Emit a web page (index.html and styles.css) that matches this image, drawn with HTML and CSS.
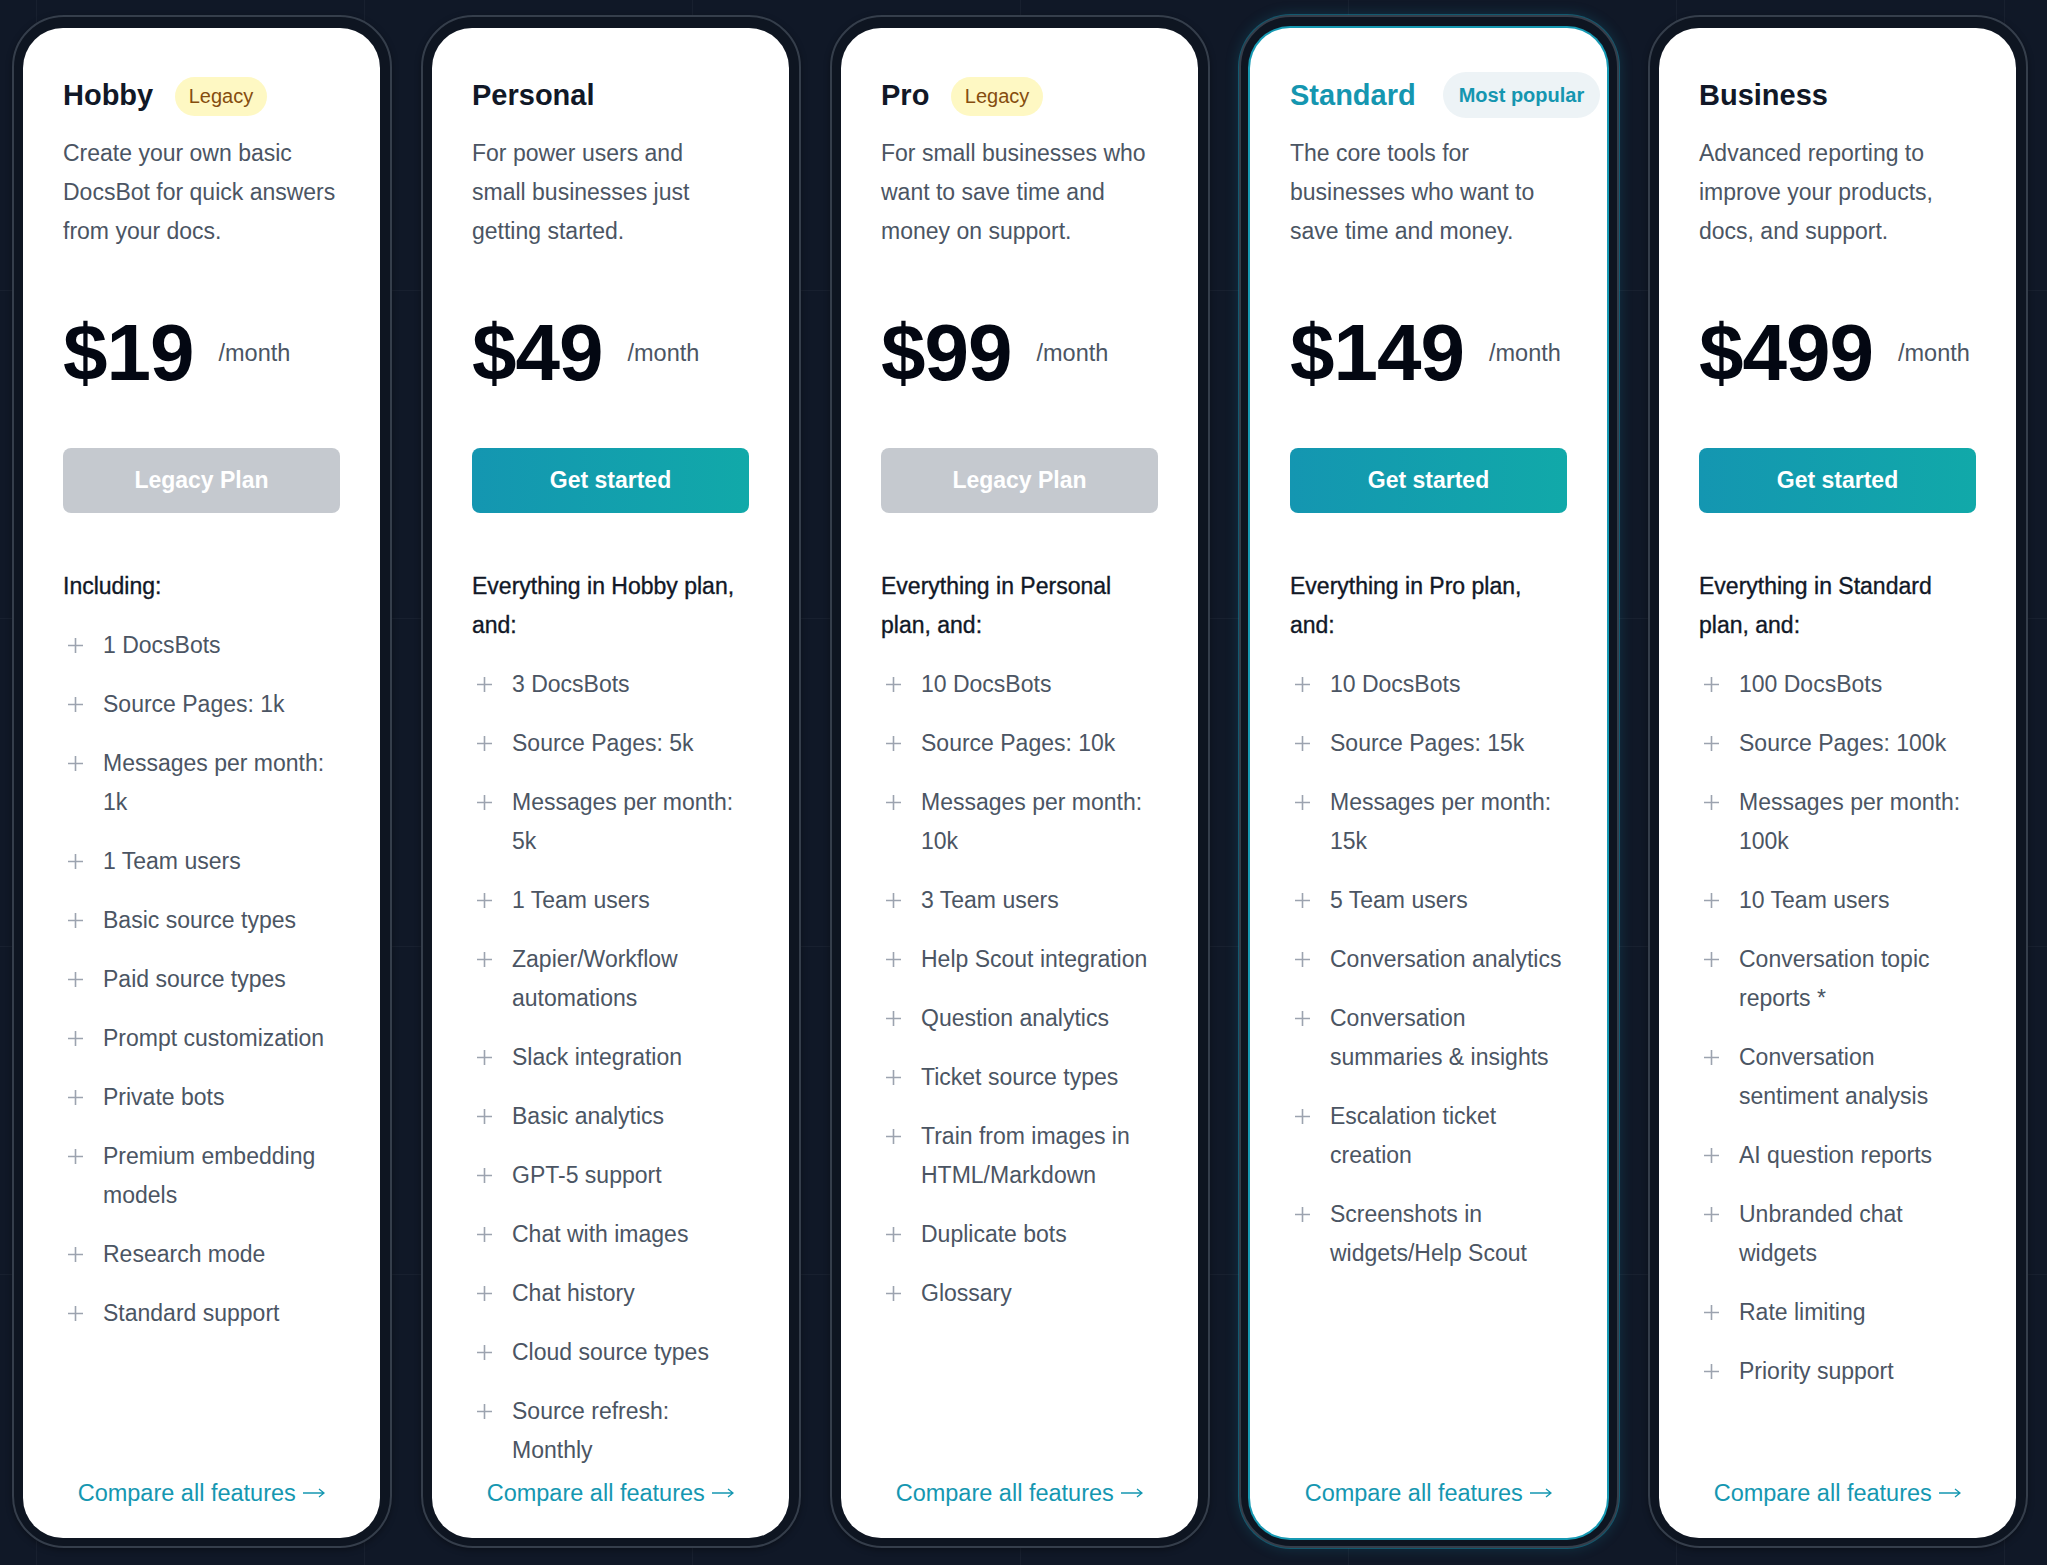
FILE: index.html
```html
<!DOCTYPE html>
<html lang="en">
<head>
<meta charset="utf-8">
<title>Pricing</title>
<link rel="stylesheet" href="styles.css">
</head>
<body>
<main class="plans">

  <section class="frame">
    <div class="card">
      <div class="card-head">
        <h2 class="plan-name">Hobby</h2>
        <span class="pill pill-legacy">Legacy</span>
      </div>
      <p class="desc">Create your own basic<br>DocsBot for quick answers<br>from your docs.</p>
      <div class="price"><span class="amount">$19</span><span class="per">/month</span></div>
      <a class="btn btn-legacy">Legacy Plan</a>
      <h3 class="incl">Including:</h3>
      <ul class="features">
        <li><svg class="plus" viewBox="0 0 25 39"><path d="M5 19.5H20M12.5 12V27"/></svg><span>1 DocsBots</span></li>
        <li><svg class="plus" viewBox="0 0 25 39"><path d="M5 19.5H20M12.5 12V27"/></svg><span>Source Pages: 1k</span></li>
        <li><svg class="plus" viewBox="0 0 25 39"><path d="M5 19.5H20M12.5 12V27"/></svg><span>Messages per month: 1k</span></li>
        <li><svg class="plus" viewBox="0 0 25 39"><path d="M5 19.5H20M12.5 12V27"/></svg><span>1 Team users</span></li>
        <li><svg class="plus" viewBox="0 0 25 39"><path d="M5 19.5H20M12.5 12V27"/></svg><span>Basic source types</span></li>
        <li><svg class="plus" viewBox="0 0 25 39"><path d="M5 19.5H20M12.5 12V27"/></svg><span>Paid source types</span></li>
        <li><svg class="plus" viewBox="0 0 25 39"><path d="M5 19.5H20M12.5 12V27"/></svg><span>Prompt customization</span></li>
        <li><svg class="plus" viewBox="0 0 25 39"><path d="M5 19.5H20M12.5 12V27"/></svg><span>Private bots</span></li>
        <li><svg class="plus" viewBox="0 0 25 39"><path d="M5 19.5H20M12.5 12V27"/></svg><span>Premium embedding models</span></li>
        <li><svg class="plus" viewBox="0 0 25 39"><path d="M5 19.5H20M12.5 12V27"/></svg><span>Research mode</span></li>
        <li><svg class="plus" viewBox="0 0 25 39"><path d="M5 19.5H20M12.5 12V27"/></svg><span>Standard support</span></li>
      </ul>
      <a class="compare">Compare all features <svg class="arrow" viewBox="0 0 22 12"><path d="M0 6H21M16 2L21 6L16 10"/></svg></a>
    </div>
  </section>

  <section class="frame">
    <div class="card">
      <div class="card-head">
        <h2 class="plan-name">Personal</h2>
      </div>
      <p class="desc">For power users and<br>small businesses just<br>getting started.</p>
      <div class="price"><span class="amount">$49</span><span class="per">/month</span></div>
      <a class="btn btn-primary">Get started</a>
      <h3 class="incl">Everything in Hobby plan, and:</h3>
      <ul class="features">
        <li><svg class="plus" viewBox="0 0 25 39"><path d="M5 19.5H20M12.5 12V27"/></svg><span>3 DocsBots</span></li>
        <li><svg class="plus" viewBox="0 0 25 39"><path d="M5 19.5H20M12.5 12V27"/></svg><span>Source Pages: 5k</span></li>
        <li><svg class="plus" viewBox="0 0 25 39"><path d="M5 19.5H20M12.5 12V27"/></svg><span>Messages per month: 5k</span></li>
        <li><svg class="plus" viewBox="0 0 25 39"><path d="M5 19.5H20M12.5 12V27"/></svg><span>1 Team users</span></li>
        <li><svg class="plus" viewBox="0 0 25 39"><path d="M5 19.5H20M12.5 12V27"/></svg><span>Zapier/Workflow automations</span></li>
        <li><svg class="plus" viewBox="0 0 25 39"><path d="M5 19.5H20M12.5 12V27"/></svg><span>Slack integration</span></li>
        <li><svg class="plus" viewBox="0 0 25 39"><path d="M5 19.5H20M12.5 12V27"/></svg><span>Basic analytics</span></li>
        <li><svg class="plus" viewBox="0 0 25 39"><path d="M5 19.5H20M12.5 12V27"/></svg><span>GPT-5 support</span></li>
        <li><svg class="plus" viewBox="0 0 25 39"><path d="M5 19.5H20M12.5 12V27"/></svg><span>Chat with images</span></li>
        <li><svg class="plus" viewBox="0 0 25 39"><path d="M5 19.5H20M12.5 12V27"/></svg><span>Chat history</span></li>
        <li><svg class="plus" viewBox="0 0 25 39"><path d="M5 19.5H20M12.5 12V27"/></svg><span>Cloud source types</span></li>
        <li><svg class="plus" viewBox="0 0 25 39"><path d="M5 19.5H20M12.5 12V27"/></svg><span>Source refresh: Monthly</span></li>
      </ul>
      <a class="compare">Compare all features <svg class="arrow" viewBox="0 0 22 12"><path d="M0 6H21M16 2L21 6L16 10"/></svg></a>
    </div>
  </section>

  <section class="frame">
    <div class="card">
      <div class="card-head">
        <h2 class="plan-name">Pro</h2>
        <span class="pill pill-legacy">Legacy</span>
      </div>
      <p class="desc">For small businesses who<br>want to save time and<br>money on support.</p>
      <div class="price"><span class="amount">$99</span><span class="per">/month</span></div>
      <a class="btn btn-legacy">Legacy Plan</a>
      <h3 class="incl">Everything in Personal plan, and:</h3>
      <ul class="features">
        <li><svg class="plus" viewBox="0 0 25 39"><path d="M5 19.5H20M12.5 12V27"/></svg><span>10 DocsBots</span></li>
        <li><svg class="plus" viewBox="0 0 25 39"><path d="M5 19.5H20M12.5 12V27"/></svg><span>Source Pages: 10k</span></li>
        <li><svg class="plus" viewBox="0 0 25 39"><path d="M5 19.5H20M12.5 12V27"/></svg><span>Messages per month: 10k</span></li>
        <li><svg class="plus" viewBox="0 0 25 39"><path d="M5 19.5H20M12.5 12V27"/></svg><span>3 Team users</span></li>
        <li><svg class="plus" viewBox="0 0 25 39"><path d="M5 19.5H20M12.5 12V27"/></svg><span>Help Scout integration</span></li>
        <li><svg class="plus" viewBox="0 0 25 39"><path d="M5 19.5H20M12.5 12V27"/></svg><span>Question analytics</span></li>
        <li><svg class="plus" viewBox="0 0 25 39"><path d="M5 19.5H20M12.5 12V27"/></svg><span>Ticket source types</span></li>
        <li><svg class="plus" viewBox="0 0 25 39"><path d="M5 19.5H20M12.5 12V27"/></svg><span>Train from images in HTML/Markdown</span></li>
        <li><svg class="plus" viewBox="0 0 25 39"><path d="M5 19.5H20M12.5 12V27"/></svg><span>Duplicate bots</span></li>
        <li><svg class="plus" viewBox="0 0 25 39"><path d="M5 19.5H20M12.5 12V27"/></svg><span>Glossary</span></li>
      </ul>
      <a class="compare">Compare all features <svg class="arrow" viewBox="0 0 22 12"><path d="M0 6H21M16 2L21 6L16 10"/></svg></a>
    </div>
  </section>

  <section class="frame frame-featured">
    <div class="card card-featured">
      <div class="card-head">
        <h2 class="plan-name plan-name-featured">Standard</h2>
        <span class="pill pill-popular">Most popular</span>
      </div>
      <p class="desc">The core tools for<br>businesses who want to<br>save time and money.</p>
      <div class="price"><span class="amount">$149</span><span class="per">/month</span></div>
      <a class="btn btn-primary">Get started</a>
      <h3 class="incl">Everything in Pro plan, and:</h3>
      <ul class="features">
        <li><svg class="plus" viewBox="0 0 25 39"><path d="M5 19.5H20M12.5 12V27"/></svg><span>10 DocsBots</span></li>
        <li><svg class="plus" viewBox="0 0 25 39"><path d="M5 19.5H20M12.5 12V27"/></svg><span>Source Pages: 15k</span></li>
        <li><svg class="plus" viewBox="0 0 25 39"><path d="M5 19.5H20M12.5 12V27"/></svg><span>Messages per month: 15k</span></li>
        <li><svg class="plus" viewBox="0 0 25 39"><path d="M5 19.5H20M12.5 12V27"/></svg><span>5 Team users</span></li>
        <li><svg class="plus" viewBox="0 0 25 39"><path d="M5 19.5H20M12.5 12V27"/></svg><span>Conversation analytics</span></li>
        <li><svg class="plus" viewBox="0 0 25 39"><path d="M5 19.5H20M12.5 12V27"/></svg><span>Conversation summaries &amp; insights</span></li>
        <li><svg class="plus" viewBox="0 0 25 39"><path d="M5 19.5H20M12.5 12V27"/></svg><span>Escalation ticket creation</span></li>
        <li><svg class="plus" viewBox="0 0 25 39"><path d="M5 19.5H20M12.5 12V27"/></svg><span>Screenshots in widgets/Help Scout</span></li>
      </ul>
      <a class="compare">Compare all features <svg class="arrow" viewBox="0 0 22 12"><path d="M0 6H21M16 2L21 6L16 10"/></svg></a>
    </div>
  </section>

  <section class="frame">
    <div class="card">
      <div class="card-head">
        <h2 class="plan-name">Business</h2>
      </div>
      <p class="desc">Advanced reporting to<br>improve your products,<br>docs, and support.</p>
      <div class="price"><span class="amount">$499</span><span class="per">/month</span></div>
      <a class="btn btn-primary">Get started</a>
      <h3 class="incl">Everything in Standard plan, and:</h3>
      <ul class="features">
        <li><svg class="plus" viewBox="0 0 25 39"><path d="M5 19.5H20M12.5 12V27"/></svg><span>100 DocsBots</span></li>
        <li><svg class="plus" viewBox="0 0 25 39"><path d="M5 19.5H20M12.5 12V27"/></svg><span>Source Pages: 100k</span></li>
        <li><svg class="plus" viewBox="0 0 25 39"><path d="M5 19.5H20M12.5 12V27"/></svg><span>Messages per month: 100k</span></li>
        <li><svg class="plus" viewBox="0 0 25 39"><path d="M5 19.5H20M12.5 12V27"/></svg><span>10 Team users</span></li>
        <li><svg class="plus" viewBox="0 0 25 39"><path d="M5 19.5H20M12.5 12V27"/></svg><span>Conversation topic reports *</span></li>
        <li><svg class="plus" viewBox="0 0 25 39"><path d="M5 19.5H20M12.5 12V27"/></svg><span>Conversation sentiment analysis</span></li>
        <li><svg class="plus" viewBox="0 0 25 39"><path d="M5 19.5H20M12.5 12V27"/></svg><span>AI question reports</span></li>
        <li><svg class="plus" viewBox="0 0 25 39"><path d="M5 19.5H20M12.5 12V27"/></svg><span>Unbranded chat widgets</span></li>
        <li><svg class="plus" viewBox="0 0 25 39"><path d="M5 19.5H20M12.5 12V27"/></svg><span>Rate limiting</span></li>
        <li><svg class="plus" viewBox="0 0 25 39"><path d="M5 19.5H20M12.5 12V27"/></svg><span>Priority support</span></li>
      </ul>
      <a class="compare">Compare all features <svg class="arrow" viewBox="0 0 22 12"><path d="M0 6H21M16 2L21 6L16 10"/></svg></a>
    </div>
  </section>

</main>
</body>
</html>
```

FILE: styles.css
```css
* {
  box-sizing: border-box;
}

html, body {
  margin: 0;
  padding: 0;
  height: 100%;
}

body {
  background-color: #101827;
  background-image:
    linear-gradient(to right, rgba(255, 255, 255, 0.035) 1px, transparent 1px),
    linear-gradient(to bottom, rgba(255, 255, 255, 0.035) 1px, transparent 1px);
  background-size: 328px 328px;
  background-position: 36px 290px;
  font-family: "Liberation Sans", Arial, Helvetica, sans-serif;
  overflow: hidden;
}

.plans {
  display: flex;
  gap: 29px;
  padding: 15px 12px 0 12px;
  height: 1548px;
}

.frame {
  width: 380px;
  min-width: 0;
  flex: 0 0 380px;
  display: flex;
  padding: 11px 10px 8px 9px;
  border: 2px solid #353e4b;
  border-radius: 52px;
  background: #0e1521;
  box-shadow: 0 2px 6px rgba(0, 0, 0, 0.35);
}

.frame-featured {
  box-shadow: 0 0 0 1px rgba(22, 153, 179, 0.45), 0 0 14px rgba(22, 153, 179, 0.25);
}

.card {
  flex: 1 1 0;
  min-width: 0;
  display: flex;
  flex-direction: column;
  background: #ffffff;
  border-radius: 40px;
  padding: 44px 40px 25px 40px;
}

.card-featured {
  box-shadow: 0 0 0 2px #1699b3;
}

.card-head {
  display: flex;
  align-items: center;
  gap: 22px;
  height: 46px;
  min-width: 0;
}

.plan-name {
  margin: 0;
  font-size: 29px;
  line-height: 40px;
  font-weight: 700;
  color: #111827;
  flex: none;
}

.plan-name-featured {
  color: #1596b0;
}

.pill {
  display: inline-flex;
  align-items: center;
  flex: none;
  border-radius: 999px;
  font-size: 20px;
  white-space: nowrap;
}

.pill-legacy {
  height: 39px;
  padding: 0 13.5px;
  background: #fef8c3;
  color: #854d0e;
  font-weight: 500;
  margin-top: 3px;
}

.pill-popular {
  height: 46px;
  padding: 0 16px;
  margin-left: 5px;
  background: #edf3f6;
  color: #1596b0;
  font-weight: 700;
}

.desc {
  margin: 16px 0 0 0;
  font-size: 23px;
  line-height: 39px;
  color: #4b5563;
  white-space: nowrap;
}

.price {
  display: flex;
  align-items: center;
  margin-top: 62px;
  height: 80px;
}

.amount {
  font-size: 80px;
  line-height: 80px;
  font-weight: 700;
  letter-spacing: -1px;
  color: #030712;
}

.per {
  margin-left: 25px;
  font-size: 23.5px;
  color: #4b5563;
}

.btn {
  display: flex;
  align-items: center;
  justify-content: center;
  margin-top: 55px;
  height: 65px;
  border-radius: 8px;
  font-size: 23px;
  font-weight: 700;
  color: #ffffff;
  text-decoration: none;
}

.btn-legacy {
  background: #c5c9cf;
}

.btn-primary {
  background: linear-gradient(90deg, #1496b1 0%, #11a9a9 100%);
}

.incl {
  margin: 54px 0 0 0;
  font-size: 23px;
  line-height: 39px;
  font-weight: 500;
  color: #111827;
  -webkit-text-stroke: 0.35px #111827;
}

.features {
  list-style: none;
  margin: 20px 0 0 0;
  padding: 0;
  display: flex;
  flex-direction: column;
  gap: 20px;
}

.features li {
  display: flex;
  align-items: flex-start;
  font-size: 23px;
  line-height: 39px;
  color: #4b5563;
}

.plus {
  flex: 0 0 25px;
  width: 25px;
  height: 39px;
  margin-right: 15px;
  fill: none;
  stroke: #9ca3af;
  stroke-width: 1.6;
}

.compare {
  margin-top: auto;
  text-align: center;
  font-size: 23.5px;
  line-height: 39px;
  color: #1597b1;
  text-decoration: none;
}

.arrow {
  width: 22px;
  height: 12px;
  margin-left: 1px;
  vertical-align: 2px;
  fill: none;
  stroke: #1597b1;
  stroke-width: 1.3;
}
```
